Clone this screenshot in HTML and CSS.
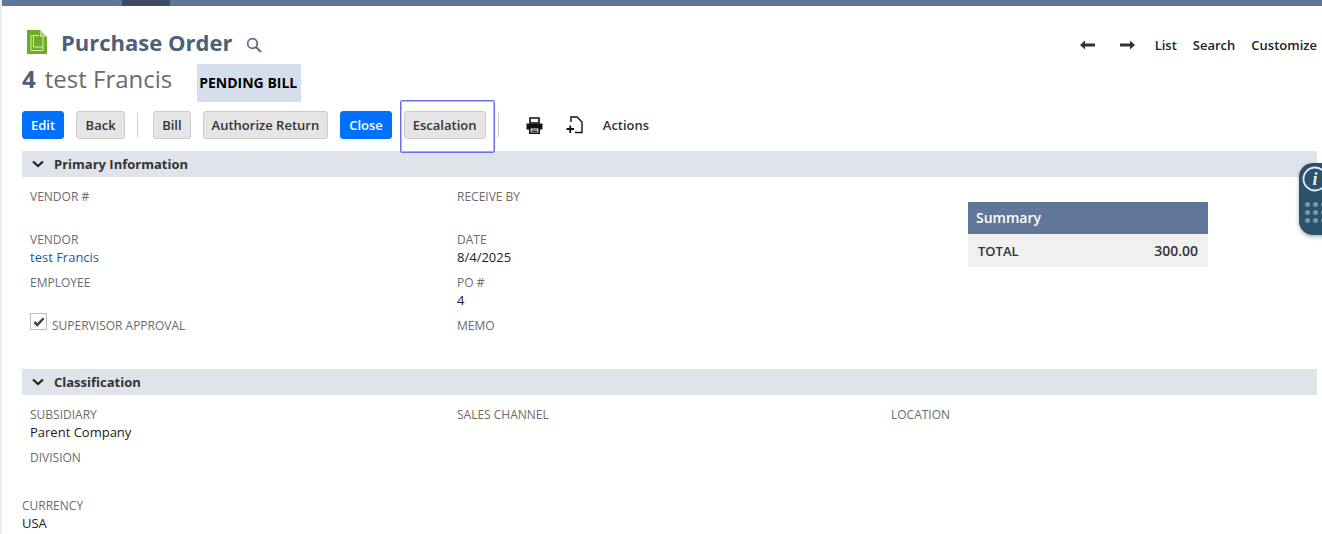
FILE: index.html
```html
<!DOCTYPE html>
<html lang="en">
<head>
<meta charset="utf-8">
<title>Purchase Order</title>
<link rel="stylesheet" href="styles.css">
</head>
<body>
<div class="topbar"><div class="topbar-active"></div></div>
<main class="page">
  <header class="title-row">
    <div class="title-left">
      <svg class="po-icon" width="22" height="26" viewBox="0 0 22 26">
        <path d="M1 1h13l7 7v17H1z" fill="#6fae24"/>
        <path d="M14 1l7 7h-7z" fill="#b5d68a"/>
        <path d="M5 6.500V21.500H17V8M5 6.500h8M7.500 6.500V18H17" fill="none" stroke="#d5e8bd" stroke-width="1"/>
      </svg>
      <h1 class="title">Purchase Order</h1>
      <svg class="search-icon" width="16" height="16" viewBox="0 0 16 16">
        <circle cx="6.500" cy="6.500" r="4.800" fill="none" stroke="#5b7396" stroke-width="1.800"/>
        <path d="M10 10l5 5" stroke="#5b7396" stroke-width="2.200"/>
      </svg>
    </div>
    <nav class="top-nav">
      <svg class="arrow" width="15" height="10" viewBox="0 0 15 10"><path d="M0 5l5-4.500V3.600h10v2.800H5v3.100z" fill="#333"/></svg>
      <svg class="arrow arrow-next" width="15" height="10" viewBox="0 0 15 10"><path d="M15 5l-5-4.500V3.600H0v2.800h10v3.100z" fill="#333"/></svg>
      <a class="nav-link nav-list">List</a>
      <a class="nav-link nav-search">Search</a>
      <a class="nav-link">Customize</a>
    </nav>
  </header>
  <div class="record-row">
    <span class="record-num">4</span>
    <span class="record-name">test Francis</span>
    <span class="status">PENDING BILL</span>
  </div>
  <div class="toolbar">
    <button class="btn btn-primary">Edit</button>
    <button class="btn btn-back">Back</button>
    <span class="divider div-a"></span>
    <button class="btn btn-bill">Bill</button>
    <button class="btn btn-auth">Authorize Return</button>
    <button class="btn btn-primary btn-close">Close</button>
    <div class="focus-box"><button class="btn">Escalation</button></div>
    <span class="divider div-b"></span>
    <svg class="print-icon" width="17" height="17" viewBox="0 0 17 17">
      <path d="M4 1h9v5H4z" fill="none" stroke="#111" stroke-width="1.600"/>
      <path d="M0.500 6.500h16v6H14V10H3v2.500H.5z" fill="#111"/>
      <path d="M3.800 10.800h9.400v5.400H3.800z" fill="none" stroke="#111" stroke-width="1.600"/>
      <path d="M5.500 13h6M5.500 14.700h6" stroke="#111" stroke-width="1"/>
    </svg>
    <svg class="new-icon" width="17" height="18" viewBox="0 0 17 18">
      <path d="M5 6V1h6l5 5v10.500H9" fill="none" stroke="#111" stroke-width="1.400"/>
      <path d="M0.500 13h7.500M4.250 9.500v7.500" stroke="#111" stroke-width="1.800"/>
    </svg>
    <a class="actions">Actions</a>
  </div>

  <section class="section section-primary">
    <h2 class="section-head">
      <svg class="chev" width="12" height="8" viewBox="0 0 12 8"><path d="M1 1.500l5 4.500 5-4.500" fill="none" stroke="#222" stroke-width="2.200"/></svg>
      Primary Information
    </h2>
    <div class="primary-body">
      <div class="field-col col-1">
        <div class="field"><label class="lbl">VENDOR #</label></div>
        <div class="field"><label class="lbl">VENDOR</label><a class="val link">test Francis</a></div>
        <div class="field"><label class="lbl">EMPLOYEE</label></div>
        <div class="field field-check">
          <span class="checkbox"><svg width="12" height="10" viewBox="0 0 14 12"><path d="M1.500 6l3.500 3.500L12.500 1.500" fill="none" stroke="#444" stroke-width="3"/></svg></span>
          <label class="lbl">SUPERVISOR APPROVAL</label>
        </div>
      </div>
      <div class="field-col col-2">
        <div class="field"><label class="lbl">RECEIVE BY</label></div>
        <div class="field"><label class="lbl">DATE</label><span class="val">8/4/2025</span></div>
        <div class="field"><label class="lbl">PO #</label><span class="val">4</span></div>
        <div class="field"><label class="lbl">MEMO</label></div>
      </div>
      <aside class="summary">
        <div class="summary-head">Summary</div>
        <div class="summary-row"><span>TOTAL</span><span class="summary-amt">300.00</span></div>
      </aside>
    </div>
  </section>

  <section class="section section-class">
    <h2 class="section-head">
      <svg class="chev" width="12" height="8" viewBox="0 0 12 8"><path d="M1 1.500l5 4.500 5-4.500" fill="none" stroke="#222" stroke-width="2.200"/></svg>
      Classification
    </h2>
    <div class="class-body">
      <div class="field-col col-1">
        <div class="field"><label class="lbl">SUBSIDIARY</label><span class="val">Parent Company</span></div>
        <div class="field"><label class="lbl">DIVISION</label></div>
      </div>
      <div class="field-col col-2b">
        <div class="field"><label class="lbl">SALES CHANNEL</label></div>
      </div>
      <div class="field-col">
        <div class="field"><label class="lbl">LOCATION</label></div>
      </div>
    </div>
  </section>

  <div class="currency">
    <label class="lbl">CURRENCY</label>
    <span class="val">USA</span>
  </div>
</main>
<div class="side-widget">
  <svg class="info" width="26" height="26" viewBox="0 0 26 26">
    <circle cx="13" cy="13" r="11.500" fill="none" stroke="#e6edf1" stroke-width="1.800"/>
    <text x="13" y="19" text-anchor="middle" class="info-i">i</text>
  </svg>
  <div class="dots"><i></i><i></i><i></i><i></i><i></i><i></i><i></i><i></i><i></i></div>
</div>
</body>
</html>
```
FILE: styles.css
```css
* { box-sizing: border-box; }
html, body { margin: 0; padding: 0; height: 534px; overflow: hidden; background: #fff; }
body { font-family: "Open Sans", sans-serif; font-size: 13px; color: #222; border-left: 2px solid #ececec; position: relative; }
.topbar { height: 6px; background: #607799; margin-left: -2px; padding-left: 122px; }
.topbar-active { width: 48px; height: 6px; background: #3c4a64; }
.page { padding: 0 5px 0 20px; }
.title-row { display: flex; justify-content: space-between; align-items: center; height: 28px; margin-top: 24px; }
.title-left { display: flex; align-items: center; margin-left: 4px; }
.po-icon { display: block; margin-top: -4px; }
.title { margin: 0 0 4px 13px; font-size: 22px; line-height: 28px; font-weight: 700; color: #4d5f79; }
.search-icon { margin: 2px 0 0 14px; }
.top-nav { display: flex; align-items: center; padding-top: 2px; }
.arrow { display: block; }
.arrow-next { margin-left: 25px; }
.nav-link { color: #222; font-weight: 600; font-size: 13px; margin-left: 16px; }
.nav-list { margin-left: 20px; }
.record-row { display: flex; align-items: flex-start; height: 38px; margin-top: 6px; }
.record-num { font-size: 24px; line-height: 30px; font-weight: 700; color: #4d5f79; }
.record-name { font-size: 24px; line-height: 30px; color: #6b6b6b; margin-left: 9px; }
.status { display: flex; align-items: center; height: 38px; width: 104px; justify-content: center; margin-left: 25px; padding: 0 2px 2px 0; background: #d5dfeb; color: #000; font-weight: 700; font-size: 14px; }
.toolbar { display: flex; align-items: center; height: 28px; margin-top: 9px; }
.btn { height: 28px; padding: 0 8px; border: 1px solid #ccc; border-radius: 3px; background: #e5e5e5; color: #333; font: 600 13px "Open Sans", sans-serif; }
.btn-primary { background: #0070ff; border-color: #0070ff; color: #fff; }
.btn-back { margin-left: 12px; width: 49px; }
.divider { width: 1px; height: 24px; background: #ccc; display: block; }
.div-a { margin-left: 12px; }
.btn-bill { margin-left: 15px; }
.btn-auth { margin-left: 12px; }
.btn-close { margin-left: 12px; }
.focus-box { width: 95px; height: 53px; margin: 3px 0 0 8px; border: 1px solid rgb(106, 108, 245); box-shadow: inset 0 0 0 1px rgba(106, 108, 245, .5); border-radius: 2px; display: flex; align-items: center; padding: 0 0 3px 3px; }
.div-b { margin-left: 3px; }
.print-icon { margin-left: 27px; }
.new-icon { margin-left: 23px; }
.actions { margin-left: 20px; font-weight: 600; color: #333; }
.section-primary { margin-top: 12px; }
.section-head { display: flex; align-items: center; height: 26px; margin: 0; background: #dfe4eb; font-size: 13px; font-weight: 700; color: #333; padding-left: 10px; }
.chev { margin-right: 10px; }
.primary-body { display: flex; height: 192px; }
.class-body { display: flex; height: 90px; }
.field-col { display: flex; flex-direction: column; }
.col-1 { width: 435px; padding-left: 8px; }
.col-2 { width: 511px; }
.col-2b { width: 434px; }
.field { height: 43px; padding-top: 11px; display: flex; flex-direction: column; }
.lbl { font-size: 12px; line-height: 18px; color: #6b6b6b; }
.val { font-size: 13px; line-height: 18px; color: #222; margin-top: -1px; }
.link { color: #255a8f; }
.field-check { flex-direction: row; align-items: flex-start; padding-top: 7px; }
.field-check .lbl { margin: 4px 0 0 5px; }
.checkbox { width: 17px; height: 17px; border: 1px solid #bbb; background: #fff; display: flex; align-items: center; justify-content: center; }
.summary { width: 240px; margin-top: 25px; align-self: flex-start; }
.summary-head { height: 32px; line-height: 32px; background: #607799; color: #fff; font-size: 14px; font-weight: 600; padding-left: 8px; }
.summary-row { height: 33px; display: flex; align-items: center; justify-content: space-between; background: #f0f0f0; padding: 0 10px; font-weight: 600; color: #333; }
.summary-row span:first-child { font-size: 13px; }
.summary-amt { font-size: 14px; }
.currency { display: flex; flex-direction: column; margin-top: 12px; }
.side-widget { position: absolute; left: 1297px; top: 163px; width: 40px; height: 72px; background: #29526b; border-radius: 14px; box-shadow: 0 2px 4px rgba(0,0,0,.3); padding: 3px 0 0 3px; }
.info { display: block; }
.info-i { font: italic 700 18px "Liberation Serif", serif; fill: #e6edf1; }
.dots { display: grid; grid-template-columns: repeat(3, 5px); gap: 3px; margin: 10px 0 0 3px; }
.dots i { width: 5px; height: 5px; border-radius: 50%; background: #7f97a8; display: block; }
```
